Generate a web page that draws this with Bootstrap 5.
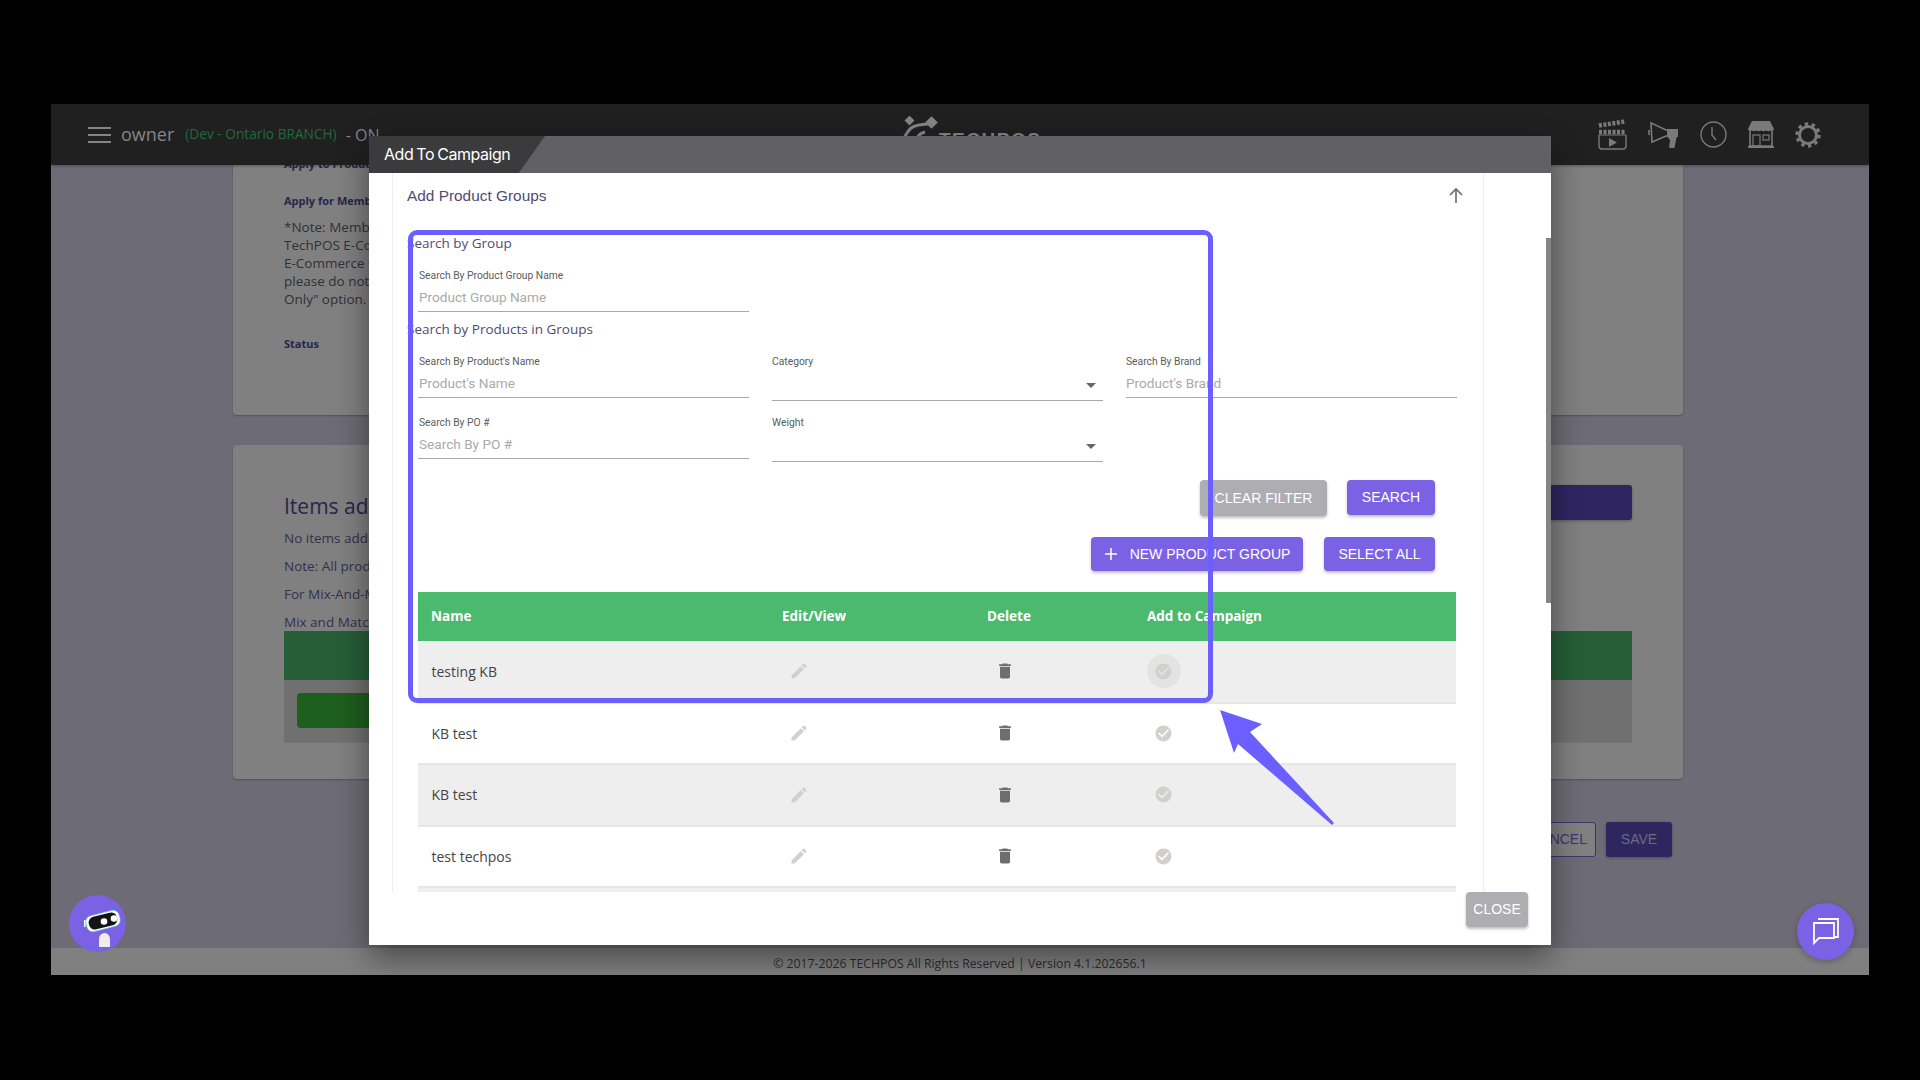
<!DOCTYPE html>
<html lang="en">
<head>
  <meta charset="UTF-8">
  <title>Add To Campaign</title>
  <link href="https://cdn.jsdelivr.net/npm/bootstrap@5.3.0/dist/css/bootstrap.min.css" rel="stylesheet">
  <script src="https://cdn.jsdelivr.net/npm/bootstrap@5.3.0/dist/js/bootstrap.bundle.min.js"></script>
  <style>
    html, body { background: #000; height: 1080px; overflow: hidden; }
    body { font-family: "Open Sans", sans-serif; }
    .app-frame { position: relative; width: 1818px; height: 871px; margin: 104px 0 0 51px; background: #6d6b75; }

    /* top bar */
    .top-bar { height: 61px; background: #202020; color: #858585; position: relative; z-index: 2; box-shadow: 0 1px 3px rgba(0,0,0,.3); }
    .bar-left { width: 851px; padding-left: 37px; }
    .burger { width: 23px; margin-right: 10px; }
    .burger span { display: block; height: 2px; background: #858585; margin: 5px 0; }
    .owner-name { font-size: 18px; margin-right: 11px; }
    .branch-name { font-size: 13.7px; color: #1f6b3b; margin-right: 9px; }
    .on-state { font-size: 16px; }
    .brand-box { margin-top: 12px; align-self: flex-start; }
    .brand-name { font-family: "Liberation Sans", sans-serif; font-weight: 700; font-size: 19px; letter-spacing: 1.5px; color: #858585; margin: 10px 0 0 1px; }
    .bar-icons { margin-left: auto; padding-right: 48px; gap: 21px; }

    /* page behind the dialog */
    .page-area { height: 783px; overflow: hidden; padding: 0 186px 0 182px; }
    .back-panel { background: #808080; border-radius: 4px; box-shadow: 0 1px 2px rgba(0,0,0,.25); padding-left: 51px; padding-right: 51px; color: #303036; font-size: 13.5px; line-height: 18px; white-space: nowrap; overflow: hidden; }
    .panel-one { height: 290px; margin-top: -40px; padding-top: 30px; }
    .panel-two { height: 334px; margin-top: 30px; padding-top: 40px; color: #33304a; }
    .panel-bold { font-weight: 700; font-size: 11px; color: #28254a; }
    .panel-gap { margin-top: 19px; }
    .panel-head { font-size: 21px; line-height: 42px; height: 42px; color: #28254a; }
    .dark-btn { width: 120px; height: 35px; background: #2f2660; border-radius: 3px; box-shadow: 0 1px 3px rgba(0,0,0,.3); }
    .green-strip { height: 49px; background: #265e37; }
    .grey-strip { height: 63px; background: #707070; padding: 13px; border-bottom: 1px solid #757575; }
    .green-block { width: 200px; height: 35px; background: #1e5e1e; border-radius: 4px; }
    .back-actions { margin-top: 43px; padding-right: 11px; gap: 10px; }
    .back-cancel, .back-save { height: 35px; border-radius: 3px; font-family: "Liberation Sans", sans-serif; font-size: 14px; line-height: 33px; text-align: center; }
    .back-cancel { width: 100px; background: #808080; border: 1px solid #3d3470; color: #3d3470; text-align: right; padding-right: 8px; }
    .back-save { width: 66px; background: #2f2660; color: #6c6a80; box-shadow: 0 1px 3px rgba(0,0,0,.3); line-height: 35px; }
    .foot-bar { height: 27px; background: #808080; color: #2c2c30; font-size: 12.25px; line-height: 31px; text-align: center; }

    /* dialog */
    .dlg { position: absolute; left: 318px; top: 32px; width: 1182px; height: 809px; background: #fff; z-index: 3; box-shadow: 0 12px 30px rgba(0,0,0,.45); }
    .dlg-head { height: 37px; background: #616065; }
    .dlg-tab { width: 176px; height: 37px; background: #3b3b3d; color: #fff; font-family: Inter, sans-serif; font-size: 16px; line-height: 37px; letter-spacing: -.45px; word-spacing: -1px; padding-left: 15px; clip-path: polygon(0 0, 100% 0, 85% 100%, 0 100%); }
    .dlg-thumb { position: absolute; right: 0; top: 102px; width: 5px; height: 365px; background: #858585; }
    .dlg-scroll { height: 719px; margin: 0 67px 0 23px; border-left: 1px solid #eee; border-right: 1px solid #eee; padding: 0 26px 0 14px; overflow: hidden; }
    .title-row { padding-top: 12px; height: 60px; color: #4f4b70; font-family: "Liberation Sans", sans-serif; font-size: 15.4px; line-height: 22px; }
    .up-arrow { margin: 2px -8px 0 0; }
    .dlg-form { padding-left: 11px; }
    .sect-name { color: #4f4b70; font-size: 13.5px; line-height: 20px; margin-left: -11px; }
    .fld-row { --bs-gutter-x: 23px; }
    .fld-label { display: block; font-family: Roboto, sans-serif; font-size: 10.3px; line-height: 14px; color: #5c5c5c; margin: 0; }
    .form-control.fld-input, .form-select.fld-input { height: 29px; border: 0; border-bottom: 1.5px solid #aaa; border-radius: 0; padding: 0; font-family: Roboto, sans-serif; font-size: 13.6px; background-image: none; box-shadow: none; }
    .form-select.fld-input { height: 32px; }
    .form-control.fld-input::placeholder { color: #aaa; }
    .col-4:first-child .fld-label, .col-4:first-child .fld-input { padding-left: 1px; }
    .sel-wrap { position: relative; }
    .sel-wrap::after { content: ""; position: absolute; right: 7px; top: 14px; border: 5px solid transparent; border-top-color: #666; border-bottom: 0; }
    .act-btn { background: #7b61e4; color: #fff; border: 0; border-radius: 4px; font-family: "Liberation Sans", sans-serif; font-size: 14px; padding: 0; box-shadow: 0 2px 3px rgba(0,0,0,.25); }
    .act-btn:hover { background: #7b61e4; color: #fff; }
    .act-btn.muted-btn { background: #aeadb2; }
    .btn-clear { width: 127px; height: 36px; }
    .btn-search { width: 88px; height: 35px; }
    .btn-new { width: 212px; height: 34px; }
    .btn-all { width: 111px; height: 34px; }
    .act-row { margin-right: 22px; gap: 21px; }
    .table.group-table { table-layout: fixed; width: 1038px; margin: 21px 0 0; --bs-table-bg: transparent; font-size: 14px; }
    .group-table th { height: 49px; background: #4bba6f; color: #fff; font-weight: 700; font-size: 13.5px; vertical-align: middle; padding: 0 0 0 13px; border: 0; }
    .group-table td { height: 61.5px; vertical-align: middle; padding: 0 0 0 13.5px; color: #444; border-bottom: 2px solid #e6e6e6; }
    .group-table tbody tr:nth-child(odd) td { background: #eee; }
    .row-icon { width: 34px; height: 34px; display: flex; align-items: center; justify-content: center; border-radius: 50%; margin-left: -1px; }
    .row-icon.is-hover { background: #e4e3e3; }
    .dlg-foot { height: 53px; padding-right: 23px; }
    .btn-close-dlg { width: 62px; height: 35px; }

    /* annotation drawn over the screenshot */
    .mark-box { position: absolute; left: 357px; top: 126px; width: 805px; height: 473px; border: 5px solid #6b5fff; border-radius: 9px; z-index: 4; }
    .mark-arrow { position: absolute; left: 1109px; top: 495px; z-index: 4; }

    /* floating round buttons */
    .float-dot { position: absolute; width: 57px; height: 57px; border-radius: 50%; background: #7b61e4; z-index: 3; }
    .dot-bot { left: 18px; top: 791px; }
    .dot-chat { left: 1746px; top: 799px; box-shadow: 0 2px 6px rgba(0,0,0,.25); }
  </style>
</head>
<body>
  <div class="app-frame">
    <div class="top-bar d-flex align-items-center">
      <div class="bar-left d-flex align-items-center">
        <div class="burger"><span></span><span></span><span></span></div>
        <span class="owner-name">owner</span>
        <span class="branch-name">(Dev - Ontario BRANCH)</span>
        <span class="on-state">- ON</span>
      </div>
      <div class="brand-box d-flex align-items-start">
        <svg width="36" height="34" viewBox="0 0 36 34" fill="none">
          <rect x="4" y="1" width="7" height="7" transform="rotate(45 7.5 4.5)" fill="#858585"/>
          <rect x="25" y="2" width="9" height="9" transform="rotate(45 29.5 6.500)" fill="#858585"/>
          <path d="M1 24 C8 10 11 9 26 8" stroke="#858585" stroke-width="3"/>
          <path d="M14 24 C16 19 19 17 23 16" stroke="#858585" stroke-width="3"/>
        </svg>
        <span class="brand-name">TECHPOS</span>
      </div>
      <div class="bar-icons d-flex align-items-center">
        <svg width="29" height="31" viewBox="0 0 29 31" fill="none" stroke="#7a7a7a" stroke-width="1.4">
          <path d="M1 6.500 L27 2.500" stroke-width="4.500" stroke-dasharray="3 1.500"/>
          <path d="M1 13 H28" stroke-width="4.500" stroke-dasharray="3 1.500"/>
          <path d="M1 16 V27 a3 3 0 0 0 3 3 H25 a3 3 0 0 0 3 -3 V16"/>
          <path d="M1 16 H28" stroke-width="1"/>
          <path d="M11 19 L19 23.500 L11 28 Z" fill="#7a7a7a" stroke="none"/>
        </svg>
        <svg width="31" height="27" viewBox="0 0 31 27" fill="none" stroke="#7a7a7a" stroke-width="1.6">
          <path d="M3 2 L18 9 H29 V15 H18 L4 21 Z"/>
          <path d="M1 9 V14" />
          <path d="M20 15 H28 L26 25 a2 2 0 0 1 -4 0 L23 19 Z" fill="#7a7a7a"/>
          <rect x="19" y="8" width="11" height="8" fill="#7a7a7a" stroke="none"/>
        </svg>
        <svg width="27" height="27" viewBox="0 0 27 27" fill="none" stroke="#7a7a7a" stroke-width="1.4">
          <circle cx="13.500" cy="13.500" r="12.500"/>
          <path d="M12 6 V14 L16 19"/>
        </svg>
        <svg width="26" height="27" viewBox="0 0 26 27">
          <path d="M4 0 H22 L26 8 Q25 11 22.500 9.500 Q20 11 18 9.500 Q15.500 11 13 9.500 Q10.500 11 8 9.500 Q5.500 11 3.500 9.500 Q1 11 0 8 Z" fill="#7a7a7a"/>
          <path d="M2 10 V25 H24 V10" fill="none" stroke="#7a7a7a" stroke-width="1.6"/>
          <rect x="0" y="25" width="26" height="2" fill="#7a7a7a"/>
          <rect x="5" y="14" width="7" height="11" fill="none" stroke="#7a7a7a" stroke-width="1.2"/>
          <rect x="15" y="14" width="6" height="5" fill="none" stroke="#7a7a7a" stroke-width="1.2"/>
        </svg>
        <svg width="26" height="26" viewBox="0 0 26 26" fill="none" stroke="#7a7a7a">
          <circle cx="13" cy="13" r="8.500" stroke-width="3"/>
          <circle cx="13" cy="13" r="11" stroke-width="3.400" stroke-dasharray="3.400 3.500"/>
        </svg>
      </div>
    </div>

    <div class="page-area">
      <div class="back-panel panel-one">
        <div class="panel-bold">Apply to Products</div>
        <div class="panel-bold panel-gap">Apply for Members</div>
        <div class="mt-2">*Note: Members</div>
        <div>TechPOS E-Commerce</div>
        <div>E-Commerce store</div>
        <div>please do not</div>
        <div>Only" option.</div>
        <div class="panel-bold" style="margin-top:27px">Status</div>
      </div>
      <div class="back-panel panel-two">
        <div class="d-flex justify-content-between align-items-start">
          <div class="panel-head">Items added</div>
          <div class="dark-btn"></div>
        </div>
        <div style="margin-top:2px">No items added</div>
        <div style="margin-top:10px">Note: All products</div>
        <div style="margin-top:10px">For Mix-And-Match</div>
        <div style="margin-top:10px">Mix and Match</div>
        <div class="green-strip"></div>
        <div class="grey-strip"><div class="green-block"></div></div>
      </div>
      <div class="back-actions d-flex justify-content-end">
        <div class="back-cancel">CANCEL</div>
        <div class="back-save">SAVE</div>
      </div>
    </div>
    <div class="foot-bar">© 2017-2026 TECHPOS All Rights Reserved | Version 4.1.202656.1</div>

    <div class="dlg">
      <div class="dlg-head"><div class="dlg-tab">Add To Campaign</div></div>
      <div class="dlg-thumb"></div>
      <div class="dlg-scroll">
        <div class="title-row d-flex justify-content-between">
          <span>Add Product Groups</span>
          <svg class="up-arrow" width="18" height="18" viewBox="0 0 18 18" fill="none" stroke="#6a6a6a" stroke-width="1.6"><path d="M9 16 V2 M3 8 L9 2 L15 8"/></svg>
        </div>
        <form class="dlg-form">
          <div class="sect-name">Search by Group</div>
          <div class="row fld-row" style="margin-top:16px">
            <div class="col-4">
              <label class="fld-label">Search By Product Group Name</label>
              <input class="form-control fld-input" placeholder="Product Group Name">
            </div>
          </div>
          <div class="sect-name" style="margin-top:7px">Search by Products in Groups</div>
          <div class="row fld-row" style="margin-top:16px">
            <div class="col-4">
              <label class="fld-label">Search By Product's Name</label>
              <input class="form-control fld-input" placeholder="Product's Name">
            </div>
            <div class="col-4">
              <label class="fld-label">Category</label>
              <div class="sel-wrap"><select class="form-select fld-input"><option></option></select></div>
            </div>
            <div class="col-4">
              <label class="fld-label">Search By Brand</label>
              <input class="form-control fld-input" placeholder="Product's Brand">
            </div>
          </div>
          <div class="row fld-row" style="margin-top:15px">
            <div class="col-4">
              <label class="fld-label">Search By PO #</label>
              <input class="form-control fld-input" placeholder="Search By PO #">
            </div>
            <div class="col-4">
              <label class="fld-label">Weight</label>
              <div class="sel-wrap"><select class="form-select fld-input"><option></option></select></div>
            </div>
          </div>
          <div class="act-row d-flex justify-content-end" style="margin-top:18px;gap:20px">
            <button type="button" class="btn act-btn muted-btn btn-clear">CLEAR FILTER</button>
            <button type="button" class="btn act-btn btn-search">SEARCH</button>
          </div>
          <div class="act-row d-flex justify-content-end" style="margin-top:21px">
            <button type="button" class="btn act-btn btn-new d-flex align-items-center justify-content-center gap-2">
              <svg width="14" height="14" viewBox="0 0 14 14" stroke="#fff" stroke-width="1.5"><path d="M7 1 V13 M1 7 H13"/></svg>
              <span class="ms-1">NEW PRODUCT GROUP</span>
            </button>
            <button type="button" class="btn act-btn btn-all">SELECT ALL</button>
          </div>
          <table class="table group-table">
            <colgroup><col style="width:351px"><col style="width:205px"><col style="width:160px"><col></colgroup>
            <thead>
              <tr><th>Name</th><th>Edit/View</th><th>Delete</th><th>Add to Campaign</th></tr>
            </thead>
            <tbody id="groupRows"></tbody>
          </table>
        </form>
      </div>
      <div class="dlg-foot d-flex justify-content-end">
        <button type="button" class="btn act-btn muted-btn btn-close-dlg">CLOSE</button>
      </div>
    </div>

    <div class="mark-box"></div>
    <svg class="mark-arrow" width="190" height="240" viewBox="0 0 190 240">
      <polygon points="60,111 102,125 90,133 174,224 172,226 78,145 74,154" fill="#6b5fff"/>
    </svg>

    <div class="float-dot dot-bot">
      <svg width="57" height="57" viewBox="0 0 57 57">
        <rect x="17" y="18" width="34" height="16" rx="6" transform="rotate(-14 34 26)" fill="#fff" stroke="#6fe6e6" stroke-width=".6"/>
        <rect x="19.500" y="19.500" width="29" height="13" rx="6" transform="rotate(-14 34 26)" fill="#141414"/>
        <circle cx="35" cy="26.500" r="3.300" fill="#fff"/>
        <circle cx="45" cy="23.500" r="3.300" fill="#fff"/>
        <rect x="15" y="25" width="1.500" height="7" fill="#fff"/>
        <path d="M30 52 V44 a5.500 6 0 0 1 11 0 V52 Z" fill="#efeded"/>
      </svg>
    </div>
    <div class="float-dot dot-chat">
      <svg width="57" height="57" viewBox="0 0 57 57" fill="none" stroke="#fff" stroke-width="1.800">
        <path d="M21 16 H41 V34 H38"/>
        <path d="M17 20 H37 V35 H22 L17 40 Z"/>
      </svg>
    </div>
  </div>

  <script>
    const groups = ['testing KB', 'KB test', 'KB test', 'test techpos', ''];
    const pencil = '<svg width="20" height="20" viewBox="0 0 24 24" fill="#d3cfcf"><path d="M3 17.25V21h3.75L17.81 9.94l-3.75-3.75L3 17.25zM20.71 7.04c.39-.39.39-1.02 0-1.41l-2.34-2.34c-.39-.39-1.02-.39-1.41 0l-1.83 1.83 3.75 3.75 1.83-1.83z"/></svg>';
    const trash = '<svg width="20" height="20" viewBox="0 0 24 24" fill="#6e6e6e"><path d="M6 19c0 1.1.9 2 2 2h8c1.1 0 2-.9 2-2V7H6v12zM19 4h-3.5l-1-1h-5l-1 1H5v2h14V4z"/></svg>';
    const check = '<svg width="19" height="19" viewBox="0 0 24 24" fill="#d3cfcf"><path d="M12 2C6.480 2 2 6.480 2 12s4.480 10 10 10 10-4.480 10-10S17.520 2 12 2zm-2 15l-5-5 1.410-1.410L10 14.170l7.590-7.590L19 8l-9 9z"/></svg>';

    document.getElementById('groupRows').innerHTML = groups.map((name, i) => `
      <tr>
        <td>${name}</td>
        <td><span class="row-icon">${pencil}</span></td>
        <td><span class="row-icon" style="margin-left:0">${trash}</span></td>
        <td><span class="row-icon ${i === 0 ? 'is-hover' : ''}">${check}</span></td>
      </tr>`).join('');
  </script>
</body>
</html>
